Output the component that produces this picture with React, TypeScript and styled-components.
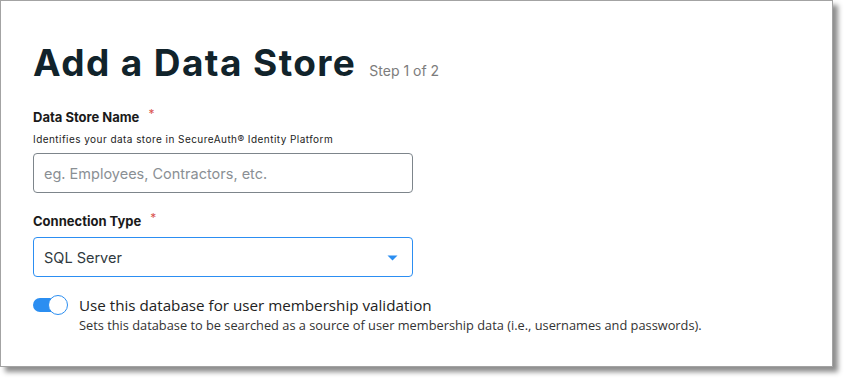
import React from "react";
import styled, { createGlobalStyle } from "styled-components";

const Global = createGlobalStyle`
  html, body { margin: 0; padding: 0; background: #ffffff; }
  body { min-height: 383px; }
  * { box-sizing: border-box; }
`;

const Page = styled.div`
  width: 848px;
  height: 383px;
  background: #ffffff;
`;

const Frame = styled.div`
  width: 833px;
  height: 367px;
  border: 1px solid #a3a3a3;
  background: #ffffff;
  box-shadow: 5px 5px 5px rgba(0, 0, 0, 0.45);
  padding: 36px 32px 0 32px;
  display: flex;
  flex-direction: column;
  font-family: Inter, "Noto Sans", sans-serif;
`;

const TitleRow = styled.div`
  display: flex;
  align-items: baseline;
  gap: 13px;
  height: 52px;
`;

const Title = styled.h1`
  margin: 0;
  font-size: 37px;
  font-weight: 700;
  color: #11232b;
  letter-spacing: 1.4px;
  line-height: 52px;
`;

const Step = styled.span`
  font-size: 14px;
  color: #7c7c7c;
  font-weight: 400;
`;

const Field = styled.div<{ $top: number }>`
  display: flex;
  flex-direction: column;
  margin-top: ${(p) => p.$top}px;
`;

const Label = styled.div`
  font-size: 13px;
  font-weight: 700;
  color: #1a1a1a;
  line-height: 16px;
  display: flex;
  align-items: flex-start;
  gap: 9px;
`;

const Req = styled.span`
  color: #d9534f;
  font-size: 12px;
  font-weight: 400;
  line-height: 10px;
`;

const Help = styled.div`
  font-size: 10px;
  letter-spacing: 0.45px;
  color: #222;
  margin-top: 8px;
  line-height: 12px;
`;

const Box = styled.div<{ $active?: boolean }>`
  width: 380px;
  height: 40px;
  margin-top: 8px;
  border: 1px solid ${(p) => (p.$active ? "#2c8ef2" : "#7d858b")};
  border-radius: 4px;
  display: flex;
  align-items: center;
  justify-content: space-between;
  padding: 0 14px 0 10px;
  font-size: 14.5px;
  color: ${(p) => (p.$active ? "#2f3a40" : "#8a8f94")};
`;

const Caret = styled.svg`
  width: 11px;
  height: 6px;
  margin-top: 2px;
`;

const ToggleRow = styled.div`
  display: flex;
  gap: 11px;
  margin-top: 18px;
  font-family: "Open Sans", "Noto Sans", sans-serif;
`;

const Switch = styled.div`
  position: relative;
  width: 35px;
  height: 20px;
  flex-shrink: 0;
`;

const Track = styled.div`
  position: absolute;
  left: 0;
  top: 3px;
  width: 30px;
  height: 14px;
  border-radius: 7px;
  background: #2b8ef1;
`;

const Knob = styled.div`
  position: absolute;
  left: 15px;
  top: 0;
  width: 20px;
  height: 20px;
  border-radius: 50%;
  background: #fff;
  border: 1.5px solid #2b8ef1;
`;

const ToggleText = styled.div`
  display: flex;
  flex-direction: column;
`;

const ToggleLabel = styled.div`
  font-size: 15.2px;
  color: #222;
  line-height: 20px;
`;

const ToggleSub = styled.div`
  font-size: 12.8px;
  color: #333;
  line-height: 16px;
  margin-top: 2px;
`;

export default function App() {
  return (
    <Page>
      <Global />
      <Frame>
        <TitleRow>
          <Title>Add a Data Store</Title>
          <Step>Step 1 of 2</Step>
        </TitleRow>
        <Field $top={20}>
          <Label>
            Data Store Name <Req>*</Req>
          </Label>
          <Help>Identifies your data store in SecureAuth® Identity Platform</Help>
          <Box>eg. Employees, Contractors, etc.</Box>
        </Field>
        <Field $top={20}>
          <Label>
            Connection Type <Req>*</Req>
          </Label>
          <Box $active>
            SQL Server
            <Caret viewBox="0 0 11 6">
              <path d="M0.5 0.5 H10.5 L5.5 5.5 Z" fill="#2b8ef1" />
            </Caret>
          </Box>
        </Field>
        <ToggleRow>
          <Switch>
            <Track />
            <Knob />
          </Switch>
          <ToggleText>
            <ToggleLabel>Use this database for user membership validation</ToggleLabel>
            <ToggleSub>
              Sets this database to be searched as a source of user membership data (i.e., usernames and passwords).
            </ToggleSub>
          </ToggleText>
        </ToggleRow>
      </Frame>
    </Page>
  );
}
